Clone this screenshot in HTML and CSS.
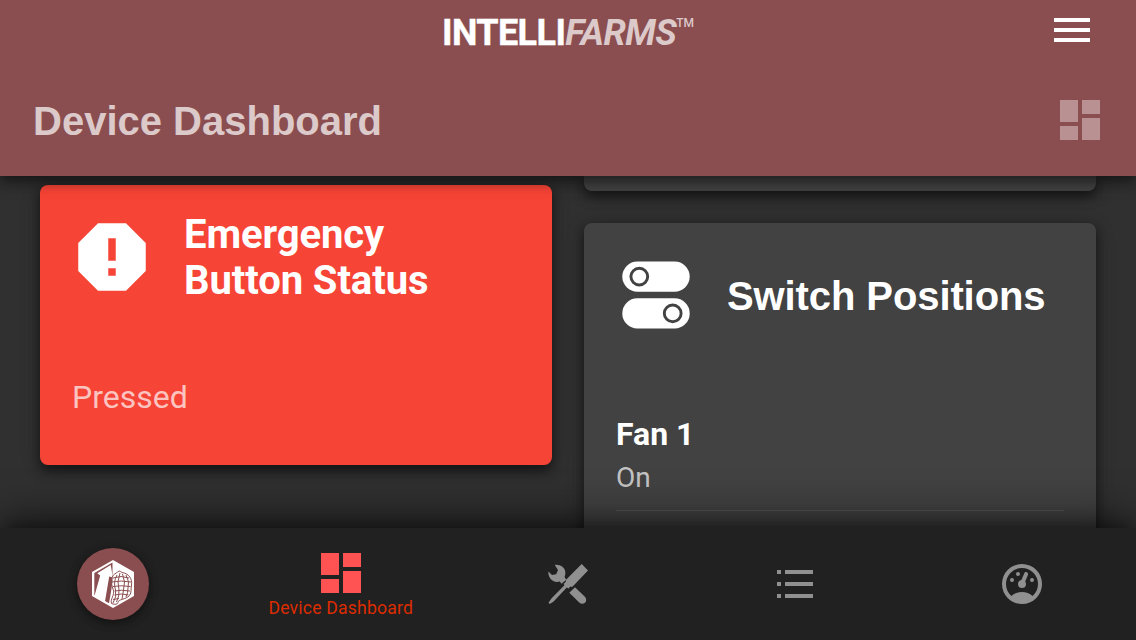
FILE: index.html
```html
<!DOCTYPE html>
<html lang="en">
<head>
<meta charset="utf-8">
<title>Device Dashboard</title>
<link rel="stylesheet" href="styles.css">
</head>
<body>
<div class="app">
  <header class="header">
    <div class="topbar">
      <div class="brand"><span class="brand-main">INTELLI</span><span class="brand-sub">FARMS</span><span class="brand-tm">TM</span></div>
      <svg class="menu" width="36" height="24" viewBox="0 0 36 24" fill="#fff"><path d="M0 0h36v4H0zM0 10h36v4H0zM0 20h36v4H0z"/></svg>
    </div>
    <div class="titlebar">
      <h1 class="title">Device Dashboard</h1>
      <svg class="title-icon" width="40" height="40" viewBox="0 0 40 40"><path d="M0 0h18v22H0zM0 26h18v14H0zM22 0h18v14H22zM22 18h18v22H22z"/></svg>
    </div>
  </header>

  <main class="content">
    <div class="column column-left">
      <section class="card card-alert">
        <div class="card-head">
          <svg class="card-icon" width="90" height="90" viewBox="0 0 24 24" fill="#fff"><path d="M15.73 3H8.27L3 8.27v7.46L8.27 21h7.46L21 15.73V8.27zM13 17h-2v-2h2zM13 13h-2V7h2z" fill-rule="evenodd"/></svg>
          <h2 class="card-title">Emergency<br>Button Status</h2>
        </div>
        <p class="status">Pressed</p>
      </section>
    </div>
    <div class="column">
      <section class="card card-previous"></section>
      <section class="card card-switch">
        <div class="card-head">
          <svg class="card-icon" width="80" height="80" viewBox="0 0 80 80">
            <g fill="#fff"><rect x="6.3" y="6.5" width="67.4" height="30.2" rx="15.1"/><rect x="6.3" y="43.3" width="67.4" height="30.2" rx="15.1"/></g>
            <g fill="#fff" stroke="#424242" stroke-width="2.9"><circle cx="23.3" cy="21.6" r="8.4"/><circle cx="56.7" cy="58.4" r="8.4"/></g>
          </svg>
          <h2 class="card-title card-title-wide">Switch Positions</h2>
        </div>
        <div class="row">
          <div class="row-name">Fan 1</div>
          <div class="row-value">On</div>
        </div>
      </section>
    </div>
  </main>

  <nav class="nav">
    <a class="nav-item nav-home">
      <span class="logo">
        <svg width="72" height="72" viewBox="0 0 72 72">
          <path d="M36 12l21 12v24L36 60 15 48V24z" fill="#fff"/>
          <path d="M17.3 24.9L35.5 14.6V33L34 44 32 55.2 17.3 47z" fill="#8b4e50"/>
          <path d="M33.7 17L20.3 25.2 23.2 27.5 17.3 48.5 27.8 54.5 32.2 28.5 35.9 29.5z" fill="#fff"/>
          <g fill="none" stroke="#8b4e50" stroke-width="1">
            <path d="M39.5 25Q42 21.5 45 24.5C52 25.5 55.5 31 54.5 37C53.5 41.5 55 44 52.5 47.5C48.5 52 41 51 41 54.5Q40 57.5 34.5 55.5C33 51 38 47 36.3 42C33.2 34 34 27 39.5 25z"/>
            <path d="M40 27Q36 34 38.5 42Q40 49 36 55M43 25Q39.5 34 42 42Q42.5 48 39.5 54M45.5 26Q49 34 46.5 42L45 51M49 27Q53 34 51 40Q51 45 49 49M36 30Q44 27 52 30M35 34Q44 32 54 34M36 38.5Q44 37 53.5 38.5M37.5 43Q44 41.5 53 43M37.5 47Q44 45 51.5 47M36 51.5l6-1"/>
          </g>
        </svg>
      </span>
    </a>
    <a class="nav-item nav-active">
      <svg width="40" height="40" viewBox="0 0 40 40" fill="#ff5252"><path d="M0 0h18v22H0zM0 26h18v14H0zM22 0h18v14H22zM22 18h18v22H22z"/></svg>
      <span class="nav-label">Device Dashboard</span>
    </a>
    <a class="nav-item">
      <svg width="40" height="40" viewBox="0 0 40 40" fill="#909090">
        <path d="M33.7 0L40 6.4 24.2 23 22.4 22.5 20.5 24.4 18.8 23.5 5.6 37.4 1.8 40 .5 38.7 3.4 34.4 16.4 21.3 15.7 19.7 17.9 17.7 17.8 16z"/>
        <path d="M6.8 1C11.5 .2 17.3 3.2 17.4 8.7Q17.3 11.1 16.6 13L18.2 15.8 13.5 19.8 11.8 17.5C5.5 19.6-.2 14.2.4 7.5L4 11 8.2 10.3 10 6z"/>
        <path d="M27 23.2L36.9 32.8Q39.3 35.7 37.3 38.4Q34.5 40.7 31.5 38.8L21.3 28.7z"/>
      </svg>
    </a>
    <a class="nav-item">
      <svg width="36" height="28" viewBox="0 0 36 28" fill="#909090"><path d="M0 0h4v4H0zM8 0h28v4H8zM0 12h4v4H0zM8 12h28v4H8zM0 24h4v4H0zM8 24h28v4H8z"/></svg>
    </a>
    <a class="nav-item">
      <svg width="48" height="48" viewBox="0 0 24 24" fill="#909090"><path d="M17.3 18C19 16.5 20 14.4 20 12A8 8 0 0 0 12 4A8 8 0 0 0 4 12C4 14.4 5 16.5 6.7 18C8.2 16.7 10 16 12 16C14 16 15.9 16.7 17.3 18M12 2A10 10 0 0 1 22 12A10 10 0 0 1 12 22A10 10 0 0 1 2 12A10 10 0 0 1 12 2M7 9A1 1 0 0 1 8 10A1 1 0 0 1 7 11A1 1 0 0 1 6 10A1 1 0 0 1 7 9M10 6A1 1 0 0 1 11 7A1 1 0 0 1 10 8A1 1 0 0 1 9 7A1 1 0 0 1 10 6M17 9A1 1 0 0 1 18 10A1 1 0 0 1 17 11A1 1 0 0 1 16 10A1 1 0 0 1 17 9M14.4 6.1C14.9 6.3 15.1 6.9 15 7.4L13.6 10.8C13.8 11.1 14 11.5 14 12A2 2 0 0 1 12 14A2 2 0 0 1 10 12C10 11 10.7 10.1 11.7 10L13.1 6.7C13.3 6.1 13.9 5.9 14.4 6.1Z"/></svg>
    </a>
  </nav>
</div>
</body>
</html>
```

FILE: styles.css
```css
* { box-sizing: border-box; }

body {
  margin: 0;
  font-family: Roboto, "Liberation Sans", sans-serif;
  color: #fff;
  background: #303030;
}

svg { display: block; flex: none; }

.app {
  width: 1136px;
  height: 640px;
  overflow: hidden;
  display: flex;
  flex-direction: column;
  background: #303030;
}

.header {
  position: relative;
  z-index: 2;
  flex: none;
  height: 176px;
  background: #8b4e50;
  box-shadow: 0 6px 10px -2px rgba(0, 0, 0, .25), 0 8px 10px rgba(0, 0, 0, .14), 0 2px 20px rgba(0, 0, 0, .3);
}

.topbar {
  display: grid;
  grid-template-columns: 1fr auto 1fr;
  height: 64px;
  padding-right: 46px;
  padding-left: 46px;
}

.brand {
  grid-column: 2;
  display: flex;
  align-items: flex-start;
  padding-top: 12px;
  font-size: 36px;
  line-height: 42px;
  font-weight: 700;
}

.brand-main { letter-spacing: -.6px; -webkit-text-stroke: .4px #fff; }
.brand-sub { font-style: italic; color: #dcc9ca; letter-spacing: -.6px; }
.brand-tm { font-size: 12px; line-height: 14px; font-weight: 500; color: #dcc9ca; padding-top: 4px; }
.menu { justify-self: end; margin-top: 18px; }

.titlebar {
  display: flex;
  align-items: center;
  justify-content: space-between;
  height: 112px;
  padding: 2px 36px 0 33px;
}

.title {
  margin: 0;
  font: 700 40px/48px "Liberation Sans", Arial, sans-serif;
  color: #dcc9ca;
}

.title-icon { fill: #b99192; margin-bottom: 2px; }

.content {
  flex: none;
  height: 352px;
  display: grid;
  grid-template-columns: 512px 512px;
  gap: 32px;
  padding: 0 40px;
}

.column { display: flex; flex-direction: column; gap: 32px; }
.column-left { padding-top: 9px; }

.card {
  flex: none;
  border-radius: 8px;
  background: #424242;
  box-shadow: 0 6px 10px -2px rgba(0, 0, 0, .25), 0 6px 12px rgba(0, 0, 0, .3), 0 2px 18px rgba(0, 0, 0, .25);
}

.card-alert { height: 280px; padding: 27px 27px; background: #f64436; }
.card-alert .card-icon { margin-bottom: 2px; }
.card-previous { height: 15px; border-radius: 0 0 8px 8px; }
.card-switch { height: 340px; padding: 32px; }

.card-head { display: flex; align-items: center; gap: 27px; }
.card-switch .card-head { gap: 31px; }

.card-title { margin: 0; font-size: 40px; line-height: 46px; font-weight: 700; letter-spacing: -.08px; }
.card-title-wide { font-family: "Liberation Sans", Arial, sans-serif; letter-spacing: -.1px; padding-top: 2px; }

.status {
  margin: 73px 0 0 5px;
  font-size: 32px;
  line-height: 40px;
  color: rgba(255, 255, 255, .7);
}

.row { margin-top: 79px; border-bottom: 1px solid #565656; height: 97px; }
.row-name { font-size: 32px; line-height: 40px; font-weight: 700; }
.row-value { margin-top: 6px; font-size: 28px; line-height: 36px; color: rgba(255, 255, 255, .7); }

.nav {
  position: relative;
  z-index: 2;
  flex: none;
  height: 112px;
  display: grid;
  grid-template-columns: repeat(5, 1fr);
  background: #212121;
  box-shadow: 0 -10px 14px -6px rgba(0, 0, 0, .3), 0 -4px 48px rgba(0, 0, 0, .65);
}

.nav-item { display: flex; flex-direction: column; align-items: center; justify-content: center; }
.nav-home { padding-right: 2px; }
.nav-active { justify-content: flex-start; padding-top: 25px; }
.nav-label { margin-top: 5px; font-size: 17.6px; line-height: 20px; letter-spacing: .2px; color: #dd2c00; white-space: nowrap; }

.logo {
  border-radius: 50%;
  background: #8b4e50;
  box-shadow: 0 3px 8px rgba(0, 0, 0, .35), 0 2px 12px rgba(0, 0, 0, .2);
}
```
